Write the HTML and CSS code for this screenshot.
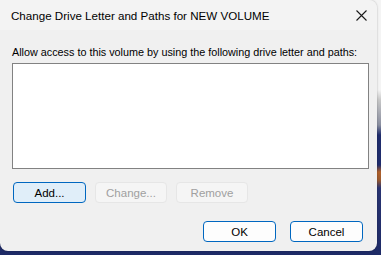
FILE: index.html
```html
<!DOCTYPE html>
<html lang="en">
<head>
<meta charset="UTF-8" />
<title>Change Drive Letter and Paths</title>
<link rel="stylesheet" href="styles.css">
</head>
<body>

<div class="dialog">
  <!-- title bar -->
  <div class="titlebar">
    <span class="title">Change Drive Letter and Paths for NEW VOLUME</span>
    <span class="close">
      <svg width="11" height="11" viewBox="0 0 11 11"><path d="M0.5 0.5L10.5 10.5M10.5 0.5L0.5 10.5" stroke="#1a1a1a" stroke-width="1.1" fill="none"/></svg>
    </span>
  </div>

  <div class="content">
    <div class="label">Allow access to this volume by using the following drive letter and paths:</div>
    <div class="list"></div>

    <div class="row">
      <button class="btn focused">Add...</button>
      <button class="btn" disabled>Change...</button>
      <button class="btn" disabled>Remove</button>
    </div>

    <div class="row footer">
      <button class="btn primary">OK</button>
      <button class="btn primary">Cancel</button>
    </div>
  </div>
</div>

</body>
</html>
```

FILE: styles.css
```css
body{
  margin:0;
  width:381px;height:255px;overflow:hidden;
  font-family:"Liberation Sans",Arial,sans-serif;
  font-size:11.5px;color:#000;
  background:linear-gradient(to bottom,#f4f4f4 0,#f4f4f4 90px,#c8c8c8 100px,#8a8fa0 125px,#1f2c6c 135px,#1f2c6c 165px,#b0602a 172px,#9a5a30 180px,#2a3472 188px,#1d2a66 255px);
}

/* dialog window */
.dialog{
  width:377px;height:251px;
  background:#f0f0f0;
  border-radius:0 8px 8px 8px;
  box-shadow:0 0 2px rgba(0,0,0,.3);
  display:flex;flex-direction:column;
}
.titlebar{
  height:30px;flex:none;
  display:flex;align-items:center;justify-content:space-between;
  padding:0 10px 0 11px;
  background:#f3f3f3;
  border-radius:0 8px 0 0;
}
.title{font-size:11.6px;white-space:nowrap;}
.close{display:flex;width:11px;height:11px;}

.content{padding:0 8px 0 12px;display:flex;flex-direction:column;}
.label{margin-top:14px;line-height:16px;font-size:10.8px;white-space:nowrap;}
.list{
  margin-top:3px;height:104px;
  background:#fff;border:1px solid #828282;
}

/* buttons */
.row{display:flex;gap:9px;margin-top:13px;padding-left:1px;}
.footer{margin-top:18px;justify-content:flex-end;gap:14px;padding-right:6px;}
.btn{
  flex:none;width:72px;height:21px;padding:0;
  font:inherit;color:#000;
  background:#fdfdfd;border:1px solid #d0d0d0;border-radius:4px;
}
.btn.focused{width:73px;background:#e0eef9;border-color:#0067c0;}
.btn.primary{width:73px;background:#fdfdfd;border-color:#0067c0;}
.btn:disabled{background:#f5f5f5;border-color:#e6e6e6;color:#a0a0a0;}
```
